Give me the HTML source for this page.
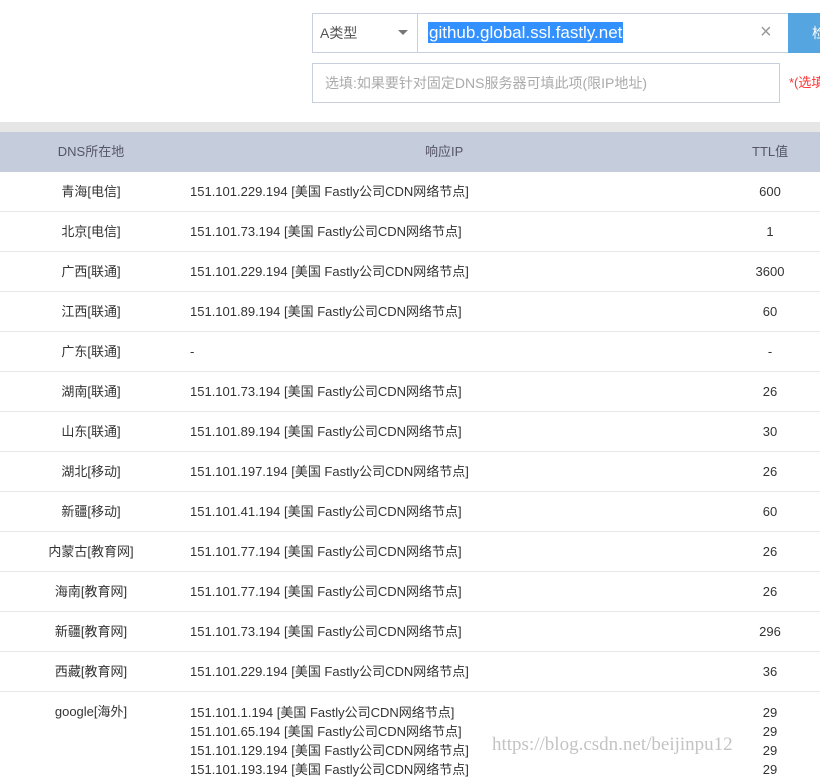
<!DOCTYPE html>
<html><head><meta charset="utf-8"><style>
body{margin:0;width:820px;height:765px;overflow:hidden;background:#fff;font-family:"Liberation Sans","Noto Sans CJK SC",sans-serif;color:#333;font-size:13px;position:relative}
.a{position:absolute}
.row{position:absolute;left:0;width:820px;height:40px;box-sizing:border-box;border-bottom:1px solid #e8e8e8;line-height:40px}
.row .l{position:absolute;left:0;width:182px;text-align:center}
.row .ip{position:absolute;left:190px}
.row .t{position:absolute;left:740px;width:60px;text-align:center}
</style></head><body>
<div class="a" style="left:312px;top:13px;width:476px;height:38px;border:1px solid #c8cfdd;border-right:none"></div>
<div class="a" style="left:417px;top:13px;width:1px;height:40px;background:#c8cfdd"></div>
<div class="a" style="left:320px;top:13px;line-height:40px;font-size:14px;color:#555">A类型</div>
<div class="a" style="left:398px;top:30px;width:0;height:0;border-left:5px solid transparent;border-right:5px solid transparent;border-top:5px solid #777"></div>
<div class="a" style="left:428px;top:22px;height:21px;line-height:21px;background:#3390ff;color:#fff;font-size:17px;padding:0 1px">github.global.ssl.fastly.net</div>
<div class="a" style="left:760px;top:22px;font-size:20px;color:#999;line-height:20px">×</div>
<div class="a" style="left:788px;top:13px;width:32px;height:40px;background:#55a5e0;color:#fff;line-height:40px;font-size:14px;padding-left:24px">检</div>
<div class="a" style="left:312px;top:63px;width:466px;height:38px;border:1px solid #c8cfdd;line-height:38px;color:#aaa;font-size:14px;text-indent:12px">选填:如果要针对固定DNS服务器可填此项(限IP地址)</div>
<div class="a" style="left:789px;top:73px;color:#f33;font-size:13px;line-height:20px;white-space:nowrap">*(选填</div>
<div class="a" style="left:0;top:122px;width:820px;height:10px;background:#e6e6e6"></div>
<div class="a" style="left:0;top:132px;width:820px;height:40px;background:#c5ccdb;line-height:40px;color:#556">
<span class="a" style="left:0;width:182px;text-align:center">DNS所在地</span>
<span class="a" style="left:425px">响应IP</span>
<span class="a" style="left:752px">TTL值</span></div>
<div class="row" style="top:172px"><span class="l">青海[电信]</span><span class="ip">151.101.229.194 [美国 Fastly公司CDN网络节点]</span><span class="t">600</span></div>
<div class="row" style="top:212px"><span class="l">北京[电信]</span><span class="ip">151.101.73.194 [美国 Fastly公司CDN网络节点]</span><span class="t">1</span></div>
<div class="row" style="top:252px"><span class="l">广西[联通]</span><span class="ip">151.101.229.194 [美国 Fastly公司CDN网络节点]</span><span class="t">3600</span></div>
<div class="row" style="top:292px"><span class="l">江西[联通]</span><span class="ip">151.101.89.194 [美国 Fastly公司CDN网络节点]</span><span class="t">60</span></div>
<div class="row" style="top:332px"><span class="l">广东[联通]</span><span class="ip">-</span><span class="t">-</span></div>
<div class="row" style="top:372px"><span class="l">湖南[联通]</span><span class="ip">151.101.73.194 [美国 Fastly公司CDN网络节点]</span><span class="t">26</span></div>
<div class="row" style="top:412px"><span class="l">山东[联通]</span><span class="ip">151.101.89.194 [美国 Fastly公司CDN网络节点]</span><span class="t">30</span></div>
<div class="row" style="top:452px"><span class="l">湖北[移动]</span><span class="ip">151.101.197.194 [美国 Fastly公司CDN网络节点]</span><span class="t">26</span></div>
<div class="row" style="top:492px"><span class="l">新疆[移动]</span><span class="ip">151.101.41.194 [美国 Fastly公司CDN网络节点]</span><span class="t">60</span></div>
<div class="row" style="top:532px"><span class="l">内蒙古[教育网]</span><span class="ip">151.101.77.194 [美国 Fastly公司CDN网络节点]</span><span class="t">26</span></div>
<div class="row" style="top:572px"><span class="l">海南[教育网]</span><span class="ip">151.101.77.194 [美国 Fastly公司CDN网络节点]</span><span class="t">26</span></div>
<div class="row" style="top:612px"><span class="l">新疆[教育网]</span><span class="ip">151.101.73.194 [美国 Fastly公司CDN网络节点]</span><span class="t">296</span></div>
<div class="row" style="top:652px"><span class="l">西藏[教育网]</span><span class="ip">151.101.229.194 [美国 Fastly公司CDN网络节点]</span><span class="t">36</span></div>
<div class="a" style="left:0;top:702px;width:182px;text-align:center;line-height:19px">google[海外]</div>
<div class="a" style="left:190px;top:703px;line-height:19px">151.101.1.194 [美国 Fastly公司CDN网络节点]<br>151.101.65.194 [美国 Fastly公司CDN网络节点]<br>151.101.129.194 [美国 Fastly公司CDN网络节点]<br>151.101.193.194 [美国 Fastly公司CDN网络节点]</div>
<div class="a" style="left:740px;top:703px;width:60px;text-align:center;line-height:19px">29<br>29<br>29<br>29</div>
<div class="a" style="left:492px;top:734px;font-family:'Liberation Serif',serif;font-size:19px;color:rgba(180,180,180,.8)">https://blog.csdn.net/beijinpu12</div>
</body></html>
